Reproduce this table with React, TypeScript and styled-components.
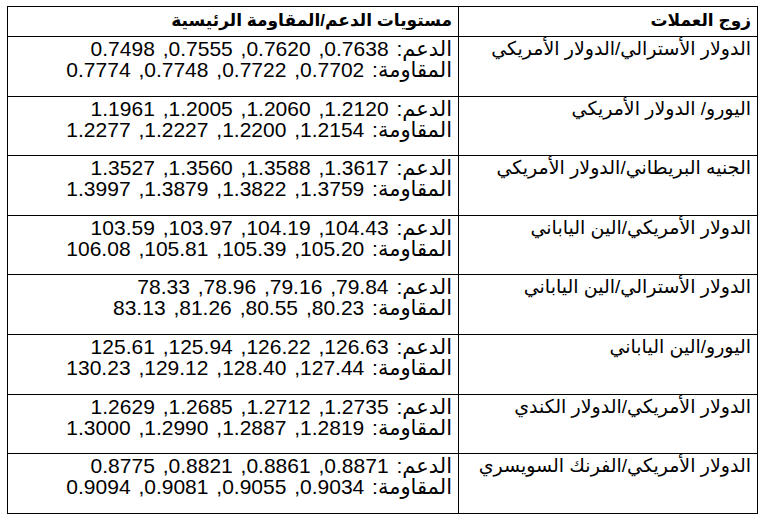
import styled, { createGlobalStyle } from 'styled-components';

const GlobalStyle = createGlobalStyle`
  html, body {
    margin: 0;
    padding: 0;
    background: #ffffff;
  }
  body {
    font-family: "Liberation Sans", "DejaVu Sans", sans-serif;
    color: #000000;
  }
`;

const Page = styled.div`
  padding: 6px 4px 0 7px;
`;

const Table = styled.table`
  width: 750px;
  border-collapse: collapse;
  table-layout: fixed;
  direction: rtl;
  line-height: 21px;
`;

const HeadCell = styled.th<{ $width: number }>`
  box-sizing: border-box;
  width: ${(p) => p.$width}px;
  border: 1px solid #000;
  padding: 3px 6px 5px 6px;
  text-align: right;
  font-weight: bold;
  font-size: 17px;
  vertical-align: top;
  white-space: nowrap;
`;

const Cell = styled.td`
  box-sizing: border-box;
  border: 1px solid #000;
  padding: 1px 6px 15.6px 6px;
  height: 59.6px;
  text-align: right;
  vertical-align: top;
`;

const Pair = styled.div`
  font-size: 19px;
  white-space: nowrap;
`;

const Line = styled.div`
  font-size: 21px;
  word-spacing: 2px;
  white-space: nowrap;
`;

type Row = {
  pair: string;
  support: string;
  resistance: string;
};

const rows: Row[] = [
  {
    pair: 'الدولار الأسترالي/الدولار الأمريكي',
    support: '0.7638, 0.7620, 0.7555, 0.7498',
    resistance: '0.7702, 0.7722, 0.7748, 0.7774',
  },
  {
    pair: 'اليورو/ الدولار الأمريكي',
    support: '1.2120, 1.2060, 1.2005, 1.1961',
    resistance: '1.2154, 1.2200, 1.2227, 1.2277',
  },
  {
    pair: 'الجنيه البريطاني/الدولار الأمريكي',
    support: '1.3617, 1.3588, 1.3560, 1.3527',
    resistance: '1.3759, 1.3822, 1.3879, 1.3997',
  },
  {
    pair: 'الدولار الأمريكي/الين الياباني',
    support: '104.43, 104.19, 103.97, 103.59',
    resistance: '105.20, 105.39, 105.81, 106.08',
  },
  {
    pair: 'الدولار الأسترالي/الين الياباني',
    support: '79.84, 79.16, 78.96, 78.33',
    resistance: '80.23, 80.55, 81.26, 83.13',
  },
  {
    pair: 'اليورو/الين الياباني',
    support: '126.63, 126.22, 125.94, 125.61',
    resistance: '127.44, 128.40, 129.12, 130.23',
  },
  {
    pair: 'الدولار الأمريكي/الدولار الكندي',
    support: '1.2735, 1.2712, 1.2685, 1.2629',
    resistance: '1.2819, 1.2887, 1.2990, 1.3000',
  },
  {
    pair: 'الدولار الأمريكي/الفرنك السويسري',
    support: '0.8871, 0.8861, 0.8821, 0.8775',
    resistance: '0.9034, 0.9055, 0.9081, 0.9094',
  },
];

const App = () => {
  return (
    <Page>
      <GlobalStyle />
      <Table dir="rtl">
        <thead>
          <tr>
            <HeadCell $width={299}>زوج العملات</HeadCell>
            <HeadCell $width={451}>مستويات الدعم/المقاومة الرئيسية</HeadCell>
          </tr>
        </thead>
        <tbody>
          {rows.map((row) => (
            <tr key={row.pair}>
              <Cell>
                <Pair>{row.pair}</Pair>
              </Cell>
              <Cell>
                <Line>الدعم: {row.support}</Line>
                <Line>المقاومة: {row.resistance}</Line>
              </Cell>
            </tr>
          ))}
        </tbody>
      </Table>
    </Page>
  );
};

export default App;
